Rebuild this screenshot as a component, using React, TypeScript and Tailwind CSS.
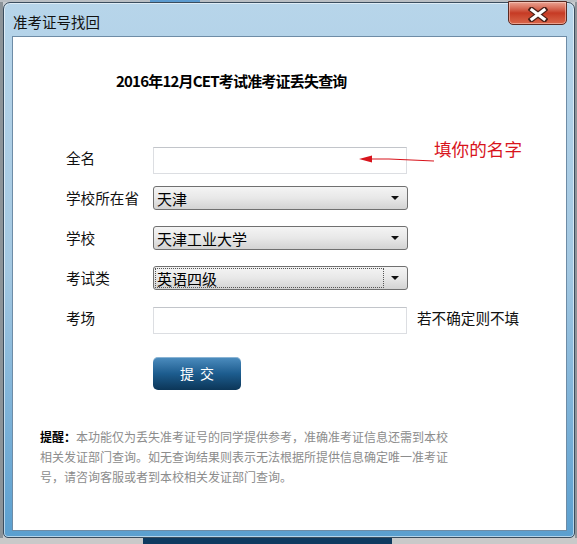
import React from "react";

const cjk = "font-['Noto_Sans_CJK_SC','Liberation_Sans',sans-serif]";

function Arrow() {
  return (
    <svg width="10" height="6" viewBox="0 0 10 6" className="block">
      <path d="M1 1 L9 1 L5 5 Z" fill="#111" />
    </svg>
  );
}

function Select({ value, focus }: { value: string; focus?: boolean }) {
  return (
    <div className="flex h-[24px] w-[255px] items-center justify-between rounded-[3px] border border-[#707070] bg-gradient-to-b from-[#f4f4f4] via-[#e8e8e8] to-[#d3d3d3] pl-[1px] pr-[7px]">
      {focus ? (
        <span className="flex h-[20px] w-[229px] items-center border border-dotted border-[#555] pl-[1px] text-[15px] leading-none text-black">
          {value}
        </span>
      ) : (
        <span className="pl-[2px] text-[15px] leading-none text-black">{value}</span>
      )}
      <Arrow />
    </div>
  );
}

function TextBox() {
  return (
    <div className="h-[27px] w-[254px] self-start mt-[9px] border border-[#dcdee2] border-t-[#c2c5ca] bg-white" />
  );
}

export default function App() {
  return (
    <div className={`flex h-[544px] w-[577px] flex-col overflow-hidden bg-[#c7cbcf] ${cjk}`}>
      <div className="flex h-[2px] shrink-0">
        <div className="w-[150px] bg-[#b9bec3]" />
        <div className="w-[50px] bg-[#5b9bd0]" />
        <div className="flex-1 bg-[#b9bec3]" />
      </div>
      <div className="flex h-[536px] shrink-0">
        <div className="w-[3px] bg-[#8c9398]" />
        <div className="relative flex w-[572px] flex-col rounded-t-[7px] rounded-b-[5px] border border-[#3a4d5e] bg-gradient-to-b from-[#b7d5ea] via-[#a3c8e2] to-[#5a9fcf] shadow-[inset_0_0_0_1px_rgba(255,255,255,0.55)]">
          {/* title bar */}
          <div className="flex h-[33px] shrink-0 items-start pl-[9px] pt-[11px]">
            <span className="text-[14.5px] leading-[15px] text-[#111]">准考证号找回</span>
          </div>
          {/* close button */}
          <div className="absolute right-[7px] top-[-2px] flex h-[24px] w-[59px] items-center justify-center rounded-b-[5px] border border-[#5b2a22] bg-gradient-to-b from-[#e9a393] via-[#c63a24] to-[#d9664a] shadow-[inset_0_0_0_1px_rgba(255,220,210,0.5)]">
            <svg width="20" height="15" viewBox="0 0 20 15" className="mt-[2px]">
              <path d="M3.5 2.5 L16.5 12.5 M16.5 2.5 L3.5 12.5" stroke="#4a2018" strokeWidth="5.5" strokeLinecap="square" />
              <path d="M4 3 L16 12 M16 3 L4 12" stroke="#ffffff" strokeWidth="3.2" strokeLinecap="square" />
            </svg>
          </div>
          {/* client */}
          <div className="ml-[8px] flex h-[495px] w-[555px] shrink-0 flex-col border border-[#6e8ca6] bg-white">
            <div className="ml-[103px] mt-[34px] text-[15px] font-bold leading-[20px] tracking-[-0.8px] text-black">
              2016年12月CET考试准考证丢失查询
            </div>

            <div className="relative ml-[53px] mt-[47px] flex flex-col">
              {/* row 1 */}
              <div className="relative flex h-[40px] items-center">
                <span className="w-[87px] text-[14.6px] leading-none text-[#111]">全名</span>
                <TextBox />
                <svg width="80" height="12" viewBox="0 0 80 12" className="absolute left-[292px] top-[16px]">
                  <path d="M1 5 L14 1.5 L14 8.5 Z" fill="#d8141c" />
                  <path d="M13 5 L31 5 L76 7" stroke="#d8141c" strokeWidth="1.2" fill="none" />
                </svg>
                <span className="absolute left-[368px] top-[2px] text-[17.6px] leading-[18px] text-[#d8141c]">
                  填你的名字
                </span>
              </div>
              {/* row 2 */}
              <div className="flex h-[40px] items-center">
                <span className="w-[87px] text-[14.6px] leading-none text-[#111]">学校所在省</span>
                <Select value="天津" />
              </div>
              {/* row 3 */}
              <div className="flex h-[40px] items-center">
                <span className="w-[87px] text-[14.6px] leading-none text-[#111]">学校</span>
                <Select value="天津工业大学" />
              </div>
              {/* row 4 */}
              <div className="flex h-[40px] items-center">
                <span className="w-[87px] text-[14.6px] leading-none text-[#111]">考试类</span>
                <Select value="英语四级" focus />
              </div>
              {/* row 5 */}
              <div className="flex h-[40px] items-center">
                <span className="w-[87px] text-[14.6px] leading-none text-[#111]">考场</span>
                <TextBox />
                <span className="ml-[10px] text-[14.6px] leading-none text-[#111]">若不确定则不填</span>
              </div>

              <button className="ml-[87px] mt-[19px] flex h-[33px] w-[88px] items-center justify-center rounded-[5px] bg-gradient-to-b from-[#4d8ec0] via-[#1d5d8f] to-[#0c3658] text-[14px] tracking-[6px] pl-[6px] text-white shadow-[inset_0_1px_0_rgba(255,255,255,0.35)]">
                提交
              </button>
            </div>

            <div className="ml-[27px] mt-[37px] flex flex-col text-[12px] leading-[20px] text-[#8c8c8c] whitespace-nowrap">
              <span>
                <b className="font-bold text-black">提醒：</b>本功能仅为丢失准考证号的同学提供参考，准确准考证信息还需到本校
              </span>
              <span>相关发证部门查询。如无查询结果则表示无法根据所提供信息确定唯一准考证</span>
              <span>号，请咨询客服或者到本校相关发证部门查询。</span>
            </div>
          </div>
        </div>
        <div className="flex-1 bg-[#8c9398]" />
      </div>
      <div className="flex h-[6px] shrink-0">
        <div className="w-[143px] bg-[#c9c9c9]" />
        <div className="w-[249px] bg-[#0e3a60]" />
        <div className="flex-1 bg-[#c9c9c9]" />
      </div>
    </div>
  );
}
